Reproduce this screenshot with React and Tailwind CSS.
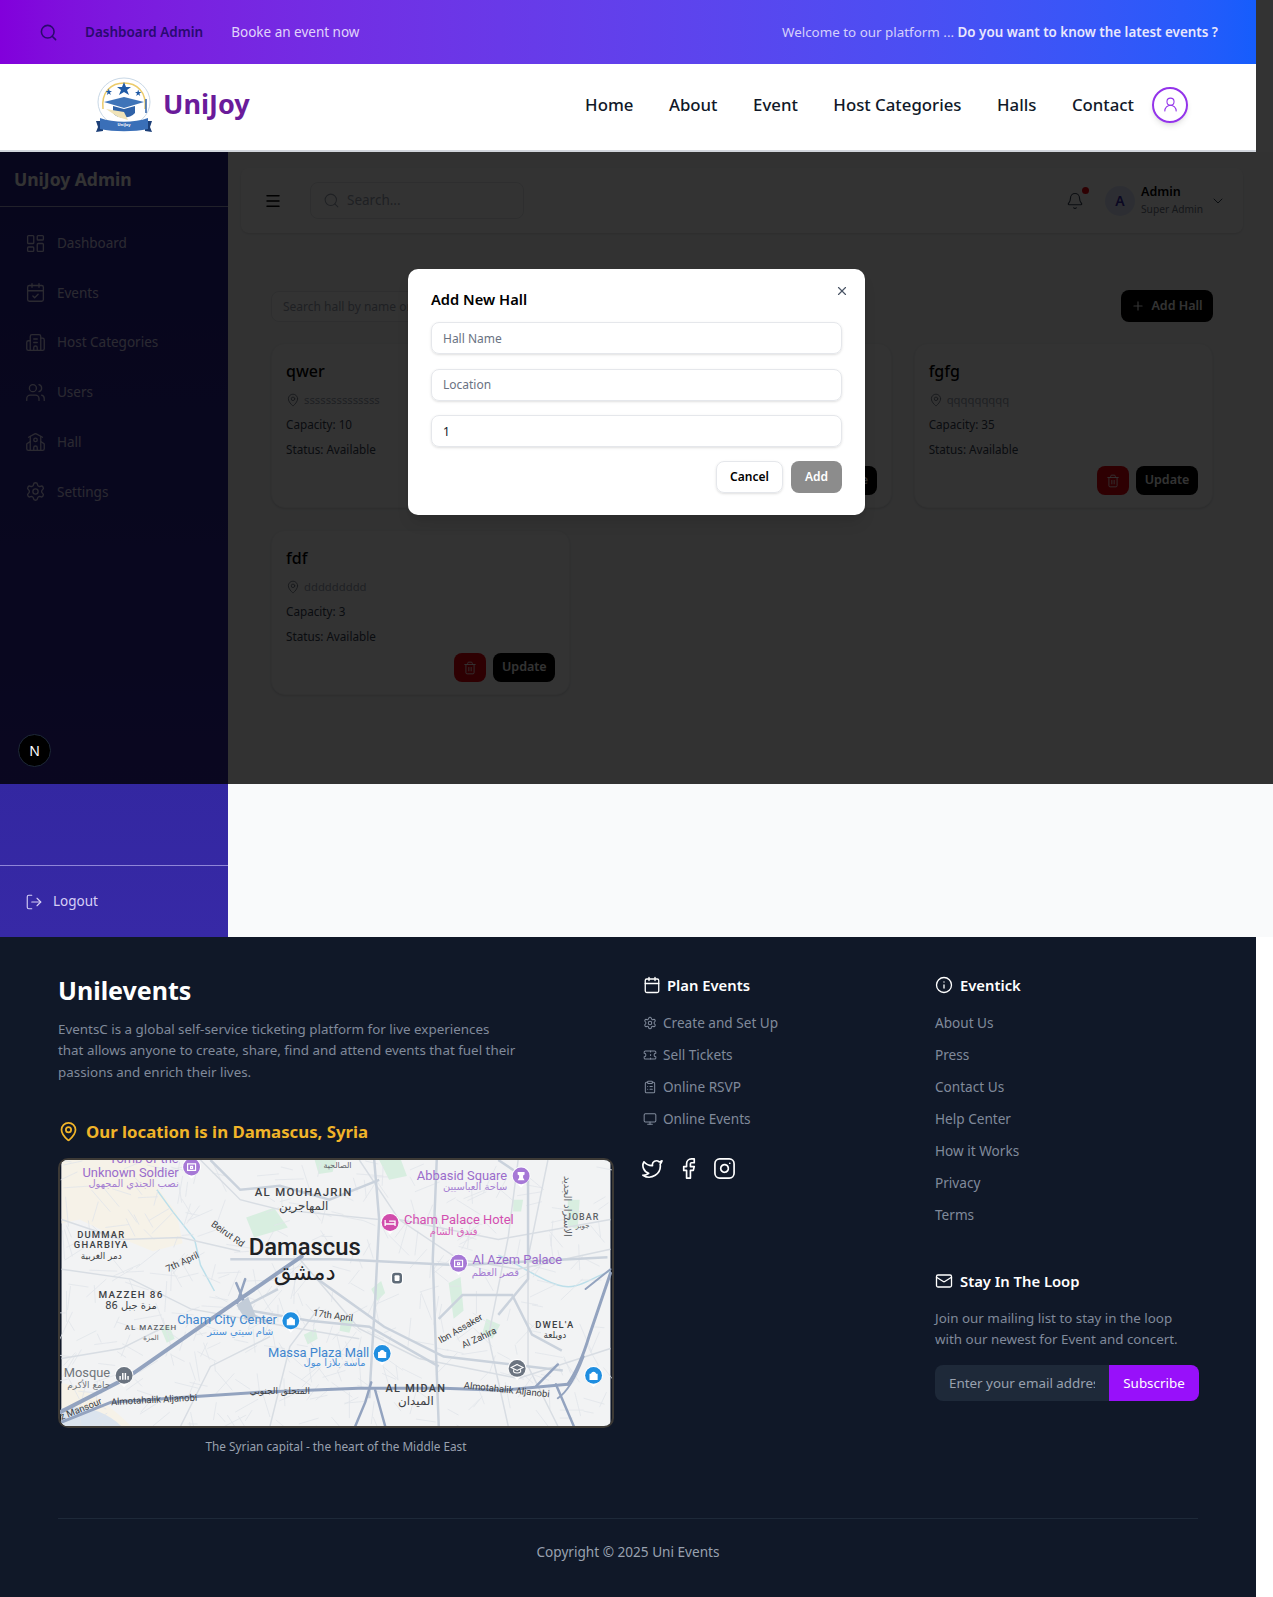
import { Search, LayoutDashboard, CalendarCheck, Building2, Users, School, Settings, LogOut, Menu, Bell, ChevronDown, Plus, MapPin, Trash2, X, UserRound, Calendar, Ticket, ClipboardList, Monitor, Twitter, Facebook, Instagram, Info, Mail } from 'lucide-react';

const NAV_LINKS = ['Home', 'About', 'Event', 'Host Categories', 'Halls', 'Contact'];

const SIDE_ITEMS = [
  { label: 'Dashboard', icon: LayoutDashboard },
  { label: 'Events', icon: CalendarCheck },
  { label: 'Host Categories', icon: Building2 },
  { label: 'Users', icon: Users },
  { label: 'Hall', icon: School },
  { label: 'Settings', icon: Settings },
];

const HALLS = [
  { name: 'qwer', location: 'ssssssssssssss', capacity: 10 },
  { name: 'asas', location: 'aaaaaaaa', capacity: 20 },
  { name: 'fgfg', location: 'qqqqqqqqq', capacity: 35 },
  { name: 'fdf', location: 'ddddddddd', capacity: 3 },
];

const PLAN_LINKS = [
  { label: 'Create and Set Up', icon: Settings },
  { label: 'Sell Tickets', icon: Ticket },
  { label: 'Online RSVP', icon: ClipboardList },
  { label: 'Online Events', icon: Monitor },
];

const EVENTICK_LINKS = ['About Us', 'Press', 'Contact Us', 'Help Center', 'How it Works', 'Privacy', 'Terms'];

// fine street mesh for the map, same every render
function streetMesh() {
  let d = '';
  for (let i = 0; i < 420; i++) {
    const x = Math.abs(Math.sin(i * 12.9898) * 43758.5453) % 553;
    const y = Math.abs(Math.sin(i * 78.233) * 12543.123) % 268;
    const a = (Math.abs(Math.sin(i * 3.17)) * 1000 % 4) * 0.8 + 0.2;
    const len = 10 + i % 22;
    d += `M${x.toFixed(0)} ${y.toFixed(0)}l${(Math.cos(a) * len).toFixed(0)} ${(Math.sin(a) * len).toFixed(0)}`;
  }
  return d;
}

function Logo() {
  return (
    <svg width="60" height="56" viewBox="0 0 60 56" className="shrink-0">
      <ellipse cx="30" cy="25" rx="26" ry="24" fill="#fff" stroke="#c9d8e6" strokeWidth="1" />
      <path d="M9 32C7 14 18 6 30 6s23 8 21 26" fill="none" stroke="#eccb6a" strokeWidth="1.5" />
      <path d="M30 5l2 5h5l-4 3 2 5-5-3-5 3 2-5-4-3h5z" fill="#1f5aa6" />
      <path d="M16 12l1 3h3l-2.500 2 1 3-2.500-2-2.500 2 1-3-2.500-2h3z" fill="#1f5aa6" transform="translate(2 2) scale(.8)" />
      <path d="M44 12l1 3h3l-2.500 2 1 3-2.500-2-2.500 2 1-3-2.500-2h3z" fill="#1f5aa6" transform="translate(9 3) scale(.8)" />
      <path d="M30 20l20 5-20 6-20-6z" fill="#3f74b8" />
      <path d="M19 29v7c4 6 17 6 22 0v-7l-11 3z" fill="#2f62a8" />
      <path d="M12 32l12 8 10 3-4-8z" fill="#f0e3b8" />
      <path d="M52 22v14" stroke="#2f62a8" strokeWidth="1.500" />
      <path d="M2 44h7v10l-7 1 2-5zM58 44h-7v10l7 1-2-5z" fill="#1c3f78" />
      <path d="M6 41c14 5 34 5 48 0v11c-14 3-34 3-48 0z" fill="#3a6fb8" />
      <text x="30" y="49" textAnchor="middle" fontSize="4" fill="#fff" fontWeight="700">UniJoy</text>
    </svg>
  );
}

function Pin({ x, y, color, children }) {
  return (
    <g transform={`translate(${x} ${y})`}>
      <path d="M-9.500 -1a9.500 9.500 0 1 1 19 0c0 5-6 7-9.500 12c-3.500-5-9.500-7-9.500-12z" fill="#fff" />
      <circle cx="0" cy="-1" r="8.500" fill={color} />
      {children}
    </g>
  );
}

function Glyph({ kind = 'bag' }) {
  if (kind === 'bag') return <path d="M-3.500 -2h7v5h-7zM-2 -2a2 2 0 0 1 4 0" fill="#fff" stroke="#fff" strokeWidth="1.200" />;
  if (kind === 'box') return <path d="M-4 -4h8v6.500h-8zM-1 -1.500h2v2h-2z" fill="none" stroke="#fff" strokeWidth="1.200" />;
  if (kind === 'bed') return <path d="M-5 -3.500v6M-5 0.500h10v2M-1 -2.500h6v3" fill="none" stroke="#fff" strokeWidth="1.300" />;
  if (kind === 'rook') return <path d="M-3.500 -5h7v2.500l-1.500 1v2.500l1.500 2.500h-7l1.500-2.500v-2.500l-1.500-1z" fill="#fff" />;
  if (kind === 'cap') return <path d="M0 -5l6 3-6 3-6-3zM-3.500 0v2.500c1.500 1.500 5.500 1.500 7 0v-2.500" fill="none" stroke="#fff" strokeWidth="1.100" />;
  return <path d="M-4 3.500v-4M-1.300 3.500v-7M1.300 3.500v-7M4 3.500v-4" stroke="#fff" strokeWidth="1.500" />;
}

function Arabic({ x, y, size = 10, fill, anchor = 'middle', children }) {
  return (
    <text x={x} y={y} fontSize={size} fill={fill} textAnchor={anchor} fontFamily="'DejaVu Sans', sans-serif" direction="rtl">{children}</text>
  );
}

function DamascusMap() {
  return (
    <svg viewBox="0 0 553 268" className="block w-full h-full" style={{ fontFamily: 'Roboto, sans-serif' }}>
      <rect width="553" height="268" fill="#f2f3f4" />
      {/* sand and parks */}
      <path d="M0 0h100l-6 24 22 30 6 30-30 8-44-18-30-14-18 4z" fill="#f6f2e8" />
      <path d="M0 225c18 2 40 14 70 43H0z" fill="#f6f2e8" />
      <path d="M0 250c20-4 44 2 60 18H0z" fill="#dbe4ee" />
      <path d="M186 58l28-10 14 20-34 10zM320 0h22l6 16-18 4zM390 124l12-6 3 34-10 8zM282 160l12 2-4 12-10-2zM510 40h12l-2 30-10-4zM312 130l10-8 4 12-8 8zM428 160l14 6-8 14-10-6zM244 176l12-6 2 10-10 6zM100 170l8-4 6 14-8 4zM255 0l22 0-4 12-14 2zM455 40l10 0-2 12-8 0z" fill="#d8eee0" />
      <path d="M96 30l16 22 22 28 6 26 14 26M440 96c20 8 40 24 60 30s30-6 53-14" fill="none" stroke="#bcdfea" strokeWidth="1.500" />
      {/* minor street grid */}
      <path d={streetMesh()} fill="none" stroke="#e1e4e9" strokeWidth="0.800" />
      <g fill="none" stroke="#d8dde3" strokeWidth="1.500">
        <path d="M0 60l60 20 60-2 60 14M0 110l70 10 60 30 110 20 60 10M0 200l60-10 40-20M120 268l30-60 60-30M210 268l20-80 30-40M450 268l-20-90 20-100 10-78M500 268l-30-60 0-110 20-98" />
        <path d="M240 100l60 70 60 30 100 20 93-30M340 60l100 20 113-20M300 0l40 60 60 40 60 10 93-20M140 0l40 40 40 10 100 10" />
      </g>
      <g fill="none" stroke="#cad2dc" strokeWidth="2.500">
        <path d="M170 100h110l120 6 150-8M315 0l5 60-4 80-6 100M378 0l-4 100 2 60 4 108M255 118l70 50 60 30 120 14M180 150l70 12 60 6 70 40M440 0l30 20 0 100-30 36" />
        <path d="M150 0l30 30 40-4 50 14 50-20M380 160l24-24 50 0 20 40 30 16" />
        <path d="M218 130l-38 20 30 14" />
      </g>
      {/* highways */}
      <g fill="none" stroke="#93a3bf" strokeLinecap="round">
        <path d="M-5 256l70-36 115-80 62-43" strokeWidth="4" />
        <path d="M0 264l30-12 20-8 89-6 60-4 100-4 85 0 60 2 66-6" strokeWidth="3" />
        <path d="M510 226c10-14 16-30 22-50l21-62" strokeWidth="3" />
        <path d="M500 240c12-8 20-26 26-42M528 130l25-20" strokeWidth="2" />
        <path d="M296 268l10-24 6-20M326 268l-10-36M176 124l10 24M185 120l-8 24M478 228l22-22M516 268l-18-42" strokeWidth="2.500" />
      </g>
      <path d="M176 146l12-8 8 20-10 4z" fill="#c2ccd8" />

      {/* labels */}
      <text x="118" y="3" fontSize="13" fill="#9a6ccb" textAnchor="end">Tomb of the</text>
      <text x="118" y="17" fontSize="13" fill="#9a6ccb" textAnchor="end">Unknown Soldier</text>
      <Arabic x="118" y="27" anchor="start" fill="#a57ed2">نصب الجندي المجهول</Arabic>
      <Pin x={131} y={8} color="#a678d6"><Glyph kind="box" /></Pin>

      <text x="244" y="36" fontSize="11.500" fill="#3c4043" textAnchor="middle" letterSpacing="1.300" fontWeight="500">AL MOUHAJRIN</text>
      <Arabic x="244" y="50" size="12" fill="#3c4043">المهاجرين</Arabic>
      <Arabic x="278" y="8" size="8" fill="#5f6368">الصالحية</Arabic>

      <text x="449" y="20" fontSize="13" fill="#9a6ccb" textAnchor="end">Abbasid Square</text>
      <Arabic x="449" y="30" anchor="start" fill="#a57ed2">ساحة العباسيين</Arabic>
      <Pin x={463} y={17} color="#a678d6"><Glyph kind="rook" /></Pin>

      <text x="345" y="64" fontSize="13" fill="#d24fb0">Cham Palace Hotel</text>
      <Arabic x="395" y="76" fill="#d75fb8">فندق الشام</Arabic>
      <Pin x={331} y={64} color="#d14cab"><Glyph kind="bed" /></Pin>

      <text x="525" y="60" fontSize="9" fill="#5f6368" textAnchor="middle" letterSpacing="1" fontWeight="500">JOBAR</text>
      <Arabic x="525" y="69" size="7" fill="#5f6368">جوبر</Arabic>
      <text transform="translate(506 16) rotate(90)" fontSize="10" fill="#5f6368" fontFamily="'DejaVu Sans', sans-serif">الاستراد الجديد</text>

      <text x="40" y="79" fontSize="9.500" fill="#3c4043" textAnchor="middle" letterSpacing="1.200" fontWeight="500">DUMMAR</text>
      <text x="40" y="89" fontSize="9.500" fill="#3c4043" textAnchor="middle" letterSpacing="1.200" fontWeight="500">GHARBIYA</text>
      <Arabic x="40" y="100" size="9" fill="#3c4043">دمر الغربية</Arabic>

      <text transform="translate(150 66) rotate(35)" fontSize="9.500" fill="#3c4043">Beirut Rd</text>
      <text x="245" y="96" fontSize="24" fill="#202124" textAnchor="middle" fontWeight="500">Damascus</text>
      <Arabic x="245" y="121" size="23" fill="#202124">دمشق</Arabic>
      <text transform="translate(107 113) rotate(-25)" fontSize="9.500" fill="#3c4043">7th April</text>

      <text x="414" y="105" fontSize="13" fill="#9a6ccb">Al Azem Palace</text>
      <Arabic x="437" y="117" fill="#a57ed2">قصر العظم</Arabic>
      <Pin x={400} y={105} color="#a678d6"><Glyph kind="box" /></Pin>

      <rect x="332" y="112.500" width="12" height="13" rx="4" fill="#fff" />
      <rect x="333" y="113.500" width="10" height="11" rx="3" fill="#5f6b78" />
      <rect x="335.500" y="116" width="5" height="6" rx="1" fill="#fff" />

      <text x="70" y="139" fontSize="10" fill="#3c4043" textAnchor="middle" letterSpacing="1.300" fontWeight="500">MAZZEH 86</text>
      <Arabic x="70" y="150" size="10" fill="#3c4043">مزة جبل 86</Arabic>
      <text x="90" y="171" fontSize="8" fill="#5f6368" textAnchor="middle" letterSpacing="1" fontWeight="500">AL MAZZEH</text>
      <Arabic x="90" y="181" size="7" fill="#5f6368">المزة</Arabic>

      <text x="217" y="165" fontSize="13" fill="#3f86cf" textAnchor="end">Cham City Center</text>
      <Arabic x="180" y="176" fill="#4a90d8">شام سيتي سنتر</Arabic>
      <Pin x={231} y={163} color="#1f8ee0"><Glyph /></Pin>

      <text transform="translate(253 157) rotate(8)" fontSize="9.500" fill="#3c4043">17th April</text>

      <text x="310" y="198" fontSize="13" fill="#3f86cf" textAnchor="end">Massa Plaza Mall</text>
      <Arabic x="275" y="208" fill="#4a90d8">ماسة بلازا مول</Arabic>
      <Pin x={323} y={196} color="#1f8ee0"><Glyph /></Pin>

      <text transform="translate(382 185) rotate(-30)" fontSize="9.500" fill="#3c4043">Ibn Assaker</text>
      <text transform="translate(405 190) rotate(-25)" fontSize="9.500" fill="#3c4043">Al Zahira</text>
      <text x="497" y="169" fontSize="9.500" fill="#3c4043" textAnchor="middle" letterSpacing="1.200" fontWeight="500">DWEL'A</text>
      <Arabic x="497" y="179" size="9" fill="#3c4043">دويلعة</Arabic>

      <Pin x={459} y={211} color="#6b7480"><Glyph kind="cap" /></Pin>
      <Pin x={536} y={218} color="#1f8ee0"><Glyph /></Pin>

      <text x="49" y="219" fontSize="13" fill="#70757a" textAnchor="end">Mosque</text>
      <Arabic x="49" y="230" anchor="start" size="9" fill="#70757a">جامع الأكرم</Arabic>
      <Pin x={63} y={218} color="#6b7480"><Glyph kind="mosque" /></Pin>

      <text transform="translate(0 262) rotate(-22)" fontSize="9.500" fill="#3c4043">z Mansour</text>
      <text transform="translate(50 247) rotate(-3)" fontSize="9.500" fill="#3c4043">Almotahalik Aljanobi</text>
      <Arabic x="220" y="236" size="9" fill="#3c4043">المتحلق الجنوبي</Arabic>
      <text x="357" y="234" fontSize="11" fill="#3c4043" textAnchor="middle" letterSpacing="1.300" fontWeight="500">AL MIDAN</text>
      <Arabic x="357" y="247" size="12" fill="#3c4043">الميدان</Arabic>
      <text transform="translate(405 230) rotate(6)" fontSize="9.500" fill="#3c4043">Almotahalik Aljanobi</text>
    </svg>
  );
}

function HallCard({ hall }) {
  return (
    <div className="h-[165px] bg-white rounded-[14px] border border-gray-100 shadow-sm pl-[14px] pr-[14px] pt-[13px] flex flex-col">
      <h3 className="text-[16px] leading-[28px] font-medium text-black">{hall.name}</h3>
      <p className="flex items-center gap-[4px] mt-[5px] h-[20px] text-[11.300px] text-gray-400">
        <MapPin className="w-[14px] h-[14px] text-gray-500" strokeWidth={1.5} />
        {hall.location}
      </p>
      <p className="mt-[4px] leading-[20px] text-[11.700px] text-gray-700">Capacity: {hall.capacity}</p>
      <p className="mt-[5px] leading-[20px] text-[11.700px] text-gray-700">Status: Available</p>
      <div className="flex justify-end gap-[7px] mt-auto mb-[12px]">
        <button className="w-[32px] h-[29px] rounded-lg bg-red-600 text-white flex items-center justify-center">
          <Trash2 className="w-[14px] h-[14px]" strokeWidth={1.5} />
        </button>
        <button className="w-[62px] h-[29px] rounded-lg bg-black text-white text-[12.500px] font-semibold">Update</button>
      </div>
    </div>
  );
}

function Dashboard() {
  return (
    <section className="flex h-[785px]">
      <aside className="relative w-[228px] shrink-0 flex flex-col bg-gradient-to-b from-[#23208c] to-[#3729a6] text-[#d6cff5]">
        <div className="h-[55px] flex items-center px-[14px] border-b border-white/60">
          <span className="text-[17.500px] font-bold text-white">UniJoy Admin</span>
        </div>
        <nav className="flex flex-col gap-[29.800px] px-[25px] pt-[26px]">
          {SIDE_ITEMS.map((item) => (
            <a key={item.label} className="flex items-center gap-[11px] h-[20px] text-[13.500px]">
              <item.icon className="w-[21px] h-[21px] shrink-0" strokeWidth={1.5} />
              {item.label}
            </a>
          ))}
        </nav>
        <div className="mt-auto h-[72px] border-t border-[#8f86d8] flex items-center gap-[10px] px-[25px] text-[13.500px]">
          <LogOut className="w-[18px] h-[18px]" strokeWidth={1.5} />
          Logout
        </div>
      </aside>

      <main className="flex-1 bg-gray-50 px-[13px] pt-[16px]">
        <div className="w-[1002px] h-[65px] bg-white rounded-lg shadow-sm flex items-center pl-[23px] pr-[17px]">
          <Menu className="w-[18px] h-[18px] text-black" />
          <div className="ml-[28px] w-[214px] h-[37px] rounded-lg border border-gray-200 flex items-center px-[12px] gap-[7px] text-[13.500px] text-gray-400">
            <Search className="w-[17px] h-[17px]" strokeWidth={1.5} />
            Search...
          </div>
          <div className="ml-auto relative">
            <Bell className="w-[18px] h-[18px] text-gray-700" strokeWidth={1.5} />
            <span className="absolute -top-[5px] right-[-5px] w-[7px] h-[7px] rounded-full bg-red-600" />
          </div>
          <div className="ml-[21px] w-[30px] h-[30px] rounded-full bg-indigo-100 text-indigo-800 text-[14px] font-semibold flex items-center justify-center">A</div>
          <div className="ml-[6px] w-[65px]">
            <p className="text-[12.500px] leading-[16px] font-semibold text-black">Admin</p>
            <p className="text-[10.200px] leading-[16px] mt-[1px] text-gray-500 whitespace-nowrap">Super Admin</p>
          </div>
          <ChevronDown className="ml-[4px] w-[16px] h-[16px] text-gray-700" strokeWidth={1.5} />
        </div>

        <div className="pl-[30px] w-[972px]">
          <div className="flex justify-between items-center mt-[57px]">
            <input
              placeholder="Search hall by name or location..."
              className="w-[300px] h-[31px] px-[11px] rounded-lg border border-gray-200 bg-white text-[12px] placeholder:text-gray-400"
            />
            <button className="w-[92px] h-[32px] rounded-lg bg-black text-white text-[12.500px] font-semibold flex items-center justify-center gap-[6px]">
              <Plus className="w-[14px] h-[14px]" />
              Add Hall
            </button>
          </div>
          <div className="grid grid-cols-3 gap-x-[22px] gap-y-[22px] mt-[21px] w-[942px]">
            {HALLS.map((hall) => <HallCard key={hall.name} hall={hall} />)}
          </div>
        </div>
      </main>
    </section>
  );
}

function Footer() {
  return (
    <footer className="w-[1256px] h-[660px] bg-[#101828] px-[58px] pt-[33px] text-[#808a9b]">
      <div className="grid grid-cols-[586px_291px_1fr] h-[548px]">
        <div>
          <h2 className="text-[25px] leading-[40px] font-bold text-white">Unilevents</h2>
          <p className="mt-[9px] text-[13.400px] leading-[21.400px] w-[458px]">
            EventsC is a global self-service ticketing platform for live experiences that allows anyone to create, share, find and attend events that fuel their passions and enrich their lives.
          </p>
          <h3 className="flex items-center gap-[7px] mt-[34px] h-[28px] text-[16.800px] font-bold text-[#f0b429]">
            <MapPin className="w-[21px] h-[21px]" strokeWidth={2} />
            Our location is in Damascus, Syria
          </h3>
          <div className="mt-[13px] w-[556px] h-[270px] rounded-[10px] border-2 border-[#3d3a36] overflow-hidden">
            <DamascusMap />
          </div>
          <p className="mt-[8px] w-[556px] text-center text-[11.800px] leading-[20px] text-gray-400">The Syrian capital - the heart of the Middle East</p>
        </div>

        <div>
          <h4 className="flex items-center gap-[6px] h-[30px] -ml-[1px] text-[14.800px] font-semibold text-white">
            <Calendar className="w-[18px] h-[18px]" strokeWidth={1.75} />
            Plan Events
          </h4>
          <ul className="mt-[7px]">
            {PLAN_LINKS.map((link) => (
              <li key={link.label} className="flex items-center gap-[6px] h-[32px] -ml-[1px] text-[13.600px]">
                <link.icon className="w-[14px] h-[14px]" strokeWidth={1.75} />
                {link.label}
              </li>
            ))}
          </ul>
          <div className="flex items-center gap-[13px] mt-[22px] -ml-[3px] text-white">
            <Twitter className="w-[23px] h-[23px]" strokeWidth={1.75} />
            <Facebook className="w-[23px] h-[23px]" strokeWidth={1.75} />
            <Instagram className="w-[23px] h-[23px]" strokeWidth={1.75} />
          </div>
        </div>

        <div>
          <h4 className="flex items-center gap-[7px] h-[30px] text-[14.800px] font-semibold text-white">
            <Info className="w-[18px] h-[18px]" strokeWidth={1.75} />
            Eventick
          </h4>
          <ul className="mt-[7px]">
            {EVENTICK_LINKS.map((link) => (
              <li key={link} className="flex items-center h-[32px] text-[13.600px]">{link}</li>
            ))}
          </ul>
          <h4 className="flex items-center gap-[7px] h-[30px] mt-[35px] text-[14.800px] font-semibold text-white">
            <Mail className="w-[18px] h-[18px]" strokeWidth={1.75} />
            Stay In The Loop
          </h4>
          <p className="mt-[12px] text-[13.400px] leading-[21.400px] whitespace-nowrap">
            Join our mailing list to stay in the loop
            <br />
            with our newest for Event and concert.
          </p>
          <div className="flex w-[264px] h-[36px] mt-[14px]">
            <input
              placeholder="Enter your email address"
              className="w-[174px] px-[14px] rounded-l-lg bg-[#1e2939] text-[13.400px] placeholder:text-gray-400"
            />
            <button className="flex-1 rounded-r-lg bg-[#9810fa] text-white text-[13.400px]">Subscribe</button>
          </div>
        </div>
      </div>
      <div className="border-t border-[#1e2939] pt-[21px] text-center text-[13.600px] leading-[24px] text-gray-400">Copyright © 2025 Uni Events</div>
    </footer>
  );
}

export default function App() {
  return (
    <div className="relative font-['Noto_Sans',sans-serif]">
      <header className="relative z-20 w-[1256px]">
        <div className="h-[64px] flex items-center bg-gradient-to-r from-[#8200db] to-[#155dfc] pl-[39px] pr-[38px] text-[13.500px]">
          <Search className="w-[19px] h-[19px] text-[#2b0a6e]" />
          <span className="ml-[27px] font-semibold text-[#2a0a70]">Dashboard Admin</span>
          <span className="ml-[28px] text-[#e0d4fb]">Booke an event now</span>
          <span className="ml-auto text-[13.400px] text-[#d5d0fb]">
            Welcome to our platform ... <span className="font-semibold text-[#e9e7fd]">Do you want to know the latest events ?</span>
          </span>
        </div>
        <div className="h-[88px] flex items-center bg-white border-b-2 border-gray-300 pl-[94px] pb-[5px]">
          <Logo />
          <span className="ml-[9px] text-[27px] font-bold text-[#6a1b9a]">UniJoy</span>
          <nav className="ml-auto flex items-center gap-[35.500px] text-[16.800px] font-medium text-gray-900">
            {NAV_LINKS.map((link) => <a key={link}>{link}</a>)}
          </nav>
          <div className="ml-[18px] mr-[68px] w-[36px] h-[36px] rounded-full border-2 border-[#9333ea] text-[#9333ea] shadow-md flex items-center justify-center">
            <UserRound className="w-[17px] h-[17px]" strokeWidth={1.5} />
          </div>
        </div>
      </header>

      <Dashboard />
      <Footer />

      {/* modal backdrop, spans the viewport */}
      <div className="absolute left-0 top-0 w-full h-[784px] z-10 bg-black/80">
        <div className="absolute left-[408px] top-[269px] w-[457px] h-[246px] bg-white rounded-[10px] shadow-lg px-[23px] pt-[17px]">
          <button className="absolute right-[16px] top-[15px] text-gray-600">
            <X className="w-[14px] h-[14px]" />
          </button>
          <h2 className="text-[14.700px] leading-[26px] font-semibold text-black">Add New Hall</h2>
          <div className="flex flex-col gap-[14.500px] mt-[10px]">
            <input placeholder="Hall Name" className="h-[32px] px-[11px] rounded-lg border border-gray-200 shadow-sm text-[12px] placeholder:text-gray-500" />
            <input placeholder="Location" className="h-[32px] px-[11px] rounded-lg border border-gray-200 shadow-sm text-[12px] placeholder:text-gray-500" />
            <input defaultValue="1" className="h-[32px] px-[11px] rounded-lg border border-gray-200 shadow-sm text-[12px] text-gray-900" />
          </div>
          <div className="flex justify-end gap-[8px] mt-[14px]">
            <button className="w-[67px] h-[32px] rounded-lg border border-gray-200 shadow-sm text-[12px] font-semibold text-black">Cancel</button>
            <button className="w-[51px] h-[32px] rounded-lg bg-[#8c8c8c] text-[12px] font-semibold text-white">Add</button>
          </div>
        </div>
      </div>

      {/* dev tools badge */}
      <div className="absolute left-[18px] top-[734px] z-20 w-[33px] h-[33px] rounded-full bg-black border border-gray-800 flex items-center justify-center text-[14px] font-normal text-white">N</div>
    </div>
  );
}
